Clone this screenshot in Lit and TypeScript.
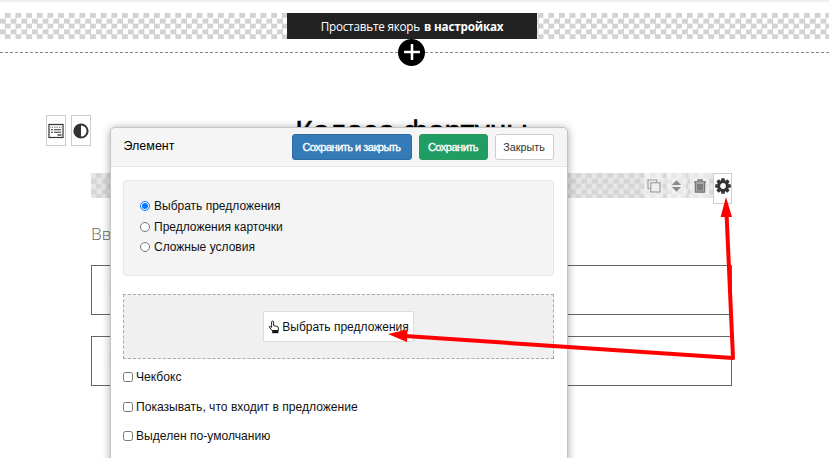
import { LitElement, html, css, svg } from "lit";
import { customElement } from "lit/decorators.js";

const gear = () => {
  const teeth = [0, 45, 90, 135, 180, 225, 270, 315].map(
    (a) => svg`<rect x="6.2" y="0.2" width="3.6" height="3.6" rx=".5" fill="#333" transform="rotate(${a} 8 8)"/>`
  );
  return svg`<svg viewBox="0 0 16 16" width="16" height="16">${teeth}<circle cx="8" cy="8" r="4.4" fill="none" stroke="#333" stroke-width="3"/></svg>`;
};

@customElement("app-root")
export class AppRoot extends LitElement {
  static styles = css`
    :host { display: block; width: 829px; height: 458px; font-family: "Liberation Sans", Arial, sans-serif; }
    * { box-sizing: border-box; }
    .page { position: relative; width: 829px; height: 458px; overflow: hidden; background: #fff; color: #000; }
    .topshade { height: 3px; background: linear-gradient(#e9e9e9, #fff); }
    .checker {
      background-color: #fff;
      background-image: conic-gradient(#d2d2d2 25%, #fff 0 50%, #d2d2d2 0 75%, #fff 0);
      background-size: 10.67px 10.67px;
    }
    .anchor { height: 26px; margin-top: 10px; display: flex; }
    .anchor-label {
      margin-left: 287px; width: 250px; background: #222; color: #fff;
      display: flex; align-items: center; justify-content: center; gap: 4px;
      font-family: "Open Sans", sans-serif; font-size: 11.7px; letter-spacing: -0.2px;
    }
    .anchor-label b { font-weight: 700; }
    .adder { display: flex; align-items: center; margin-top: -1px; height: 28px; }
    .dash { flex: 1; border-top: 1px dashed #888; }
    .dash.left { flex: 0 0 398px; }
    .plus { width: 27px; height: 27px; border-radius: 50%; background: #000; display: flex; align-items: center; justify-content: center; flex: none; }
    .main { position: relative; margin: 49px 97px 0 91px; }
    .side-tools { position: absolute; left: -45px; top: 0; display: flex; gap: 5px; }
    .side-btn { width: 20px; height: 31px; border: 1px solid #ccc; background: #fff; display: flex; align-items: center; justify-content: center; }
    .title { height: 58px; margin: 0; text-align: center; font-family: "Liberation Sans", sans-serif; font-weight: 400; font-size: 30px; line-height: 31px; -webkit-text-stroke: 0.5px #000; }
    .tool-band { height: 25px; display: flex; justify-content: flex-end; gap: 4px; background-image: conic-gradient(#d6d6d6 25%, #e6e6e6 0 50%, #d6d6d6 0 75%, #e6e6e6 0); }
    .tool { width: 19px; height: 31px; display: flex; align-items: center; justify-content: center; padding-bottom: 6px; background: rgba(255,255,255,.45); flex: none; }
    .tool.gear { background: #fff; border: 1px solid #ccc; }
    .intro { margin: 25px 0 0; height: 22px; font-family: "Open Sans", sans-serif; font-weight: 300; font-size: 17px; line-height: 22px; color: #666; }
    .box { height: 50px; border: 1px solid #666; margin-top: 21px; padding: 15px 17px; font-size: 13px; color: #337ab7; }
    .intro + .box { margin-top: 20px; }
    .modal {
      position: absolute; left: 110px; top: 127px; width: 457.5px; height: 360px;
      background: #fff; border: 1px solid #c4c4c4; border-radius: 5px;
      box-shadow: 0 1px 8px rgba(0,0,0,.35); font-size: 12px;
    }
    .head { height: 39px; background: #f5f5f5; border-bottom: 1px solid #e5e5e5; border-radius: 5px 5px 0 0; display: flex; align-items: center; padding: 0 13px 0 12.5px; gap: 7px; }
    .head-title { flex: 1; font-size: 12.5px; margin-top: -3px; }
    .btn { height: 26px; border-radius: 3px; border: 1px solid transparent; display: flex; align-items: center; justify-content: center; font-size: 11px; letter-spacing: -0.5px; white-space: nowrap; background: none; font-family: inherit; padding: 0; }
    .btn.blue { width: 120px; background: #337ab7; color: #fff; border-color: #2e6da4; -webkit-text-stroke: 0.35px #fff; }
    .btn.green { width: 69px; background: #1f9d63; color: #fff; border-color: #2a9a5c; -webkit-text-stroke: 0.35px #fff; }
    .btn.plain { width: 59px; background: #fff; color: #333; border-color: #ccc; font-size: 10.8px; letter-spacing: 0; }
    .body { padding: 13px 12.5px 0 12px; }
    .radios { height: 96px; background: #f4f4f4; border: 1px solid #e6e6e6; border-radius: 4px; padding: 17px 16px; display: flex; flex-direction: column; gap: 4.5px; }
    label { display: flex; align-items: center; gap: 4px; height: 16px; line-height: 16px; color: #111; }
    input { margin: 0; width: 10px; height: 10px; flex: none; }
    .pick { margin-top: 18px; height: 65px; background: #f0f0f0; border: 1px dashed #aaa; display: flex; align-items: center; justify-content: center; }
    .pick-btn { width: 151px; height: 31px; background: #fff; border: 1px solid #ddd; display: flex; align-items: center; justify-content: center; gap: 2px; font-size: 12px; color: #111; }
    .checks { margin-top: 10px; display: flex; flex-direction: column; gap: 13.5px; font-size: 12.1px; }
    .checks label { gap: 3px; }
    .arrows { position: absolute; left: 0; top: 0; pointer-events: none; }
  `;

  render() {
    return html`
      <div class="page">
        <div class="topshade"></div>
        <div class="anchor checker">
          <div class="anchor-label"><span>Проставьте якорь</span><b>в настройках</b></div>
        </div>
        <div class="adder">
          <div class="dash left"></div>
          <div class="plus">
            <svg viewBox="0 0 16 16" width="16" height="16"><path d="M8 1v14M1 8h14" stroke="#fff" stroke-width="2.6" stroke-linecap="round"/></svg>
          </div>
          <div class="dash"></div>
        </div>
        <div class="main">
          <div class="side-tools">
            <div class="side-btn">
              <svg viewBox="0 0 16 16" width="16" height="16">
                <rect x="1" y="1.5" width="14" height="13" fill="#fff" stroke="#333" stroke-width="1.2"/>
                <path d="M1 4.2h14" stroke="#999" stroke-width="1.6" stroke-dasharray="1.5 1"/>
                <path d="M3 6.8h2M6 6.8h7M3 9.2h2M6 9.2h7" stroke="#333" stroke-width="1.1"/>
                <path d="M9.5 12h4" stroke="#555" stroke-width="1.6"/>
              </svg>
            </div>
            <div class="side-btn">
              <svg viewBox="0 0 16 16" width="16" height="16">
                <circle cx="8" cy="8" r="6.6" fill="#fff" stroke="#333" stroke-width="2"/>
                <path d="M8 1.4a6.6 6.6 0 0 0 0 13.2z" fill="#333"/>
              </svg>
            </div>
          </div>
          <h1 class="title">Колесо фортуны</h1>
          <div class="tool-band checker">
            <div class="tool">
              <svg viewBox="0 0 14 14" width="14" height="14" fill="none" stroke="#999" stroke-width="1.1">
                <path d="M9.5 3V1H1v8.5h2"/><rect x="3.8" y="3.8" width="9.2" height="9.2" fill="#eee"/>
              </svg>
            </div>
            <div class="tool">
              <svg viewBox="0 0 12 14" width="11" height="14"><path d="M6 .8 11 6H1zM1 8h10l-5 5.2z" fill="#8a8a8a"/></svg>
            </div>
            <div class="tool">
              <svg viewBox="0 0 14 14" width="14" height="14" fill="none" stroke="#777" stroke-width="1.3">
                <path d="M1 3h12M5 3V1h4v2" /><path d="M2.4 3.2v10h9.2v-10" fill="#aaa"/><path d="M5 5v6.5M7 5v6.5M9 5v6.5" stroke="#666"/>
              </svg>
            </div>
            <div class="tool gear">${gear()}</div>
          </div>
          <p class="intro">Введите текст</p>
          <div class="box">Выбрать</div>
          <div class="box">Выбрать</div>
        </div>

        <section class="modal">
          <div class="head">
            <div class="head-title">Элемент</div>
            <button class="btn blue">Сохранить и закрыть</button>
            <button class="btn green">Сохранить</button>
            <button class="btn plain">Закрыть</button>
          </div>
          <div class="body">
            <div class="radios">
              <label><input type="radio" name="r" checked />Выбрать предложения</label>
              <label><input type="radio" name="r" />Предложения карточки</label>
              <label><input type="radio" name="r" />Сложные условия</label>
            </div>
            <div class="pick">
              <div class="pick-btn">
                <svg viewBox="0 0 12 14" width="12" height="14">
                  <path d="M3.6 7.5V2a1 1 0 0 1 2 0v3.6l3.4.8c.9.2 1.4.8 1.4 1.6v2.5H4.2L1 6.8c.6-.8 1.6-.5 2.6.7z" fill="#fff" stroke="#111" stroke-width=".9"/>
                  <rect x="4.2" y="10.6" width="6.2" height="2.6" fill="#111"/>
                </svg>
                <span>Выбрать предложения</span>
              </div>
            </div>
            <div class="checks">
              <label><input type="checkbox" />Чекбокс</label>
              <label><input type="checkbox" />Показывать, что входит в предложение</label>
              <label><input type="checkbox" />Выделен по-умолчанию</label>
            </div>
          </div>
        </section>

        <svg class="arrows" width="829" height="458" viewBox="0 0 829 458">
          <path d="M733 358 726.6 215M733 358 405 336" fill="none" stroke="#fe0000" stroke-width="4" stroke-linecap="round"/>
          <path d="M726 197 720.6 217H732zM388 334 407.5 329.5 407 342z" fill="#fe0000"/>
        </svg>
      </div>
    `;
  }
}
